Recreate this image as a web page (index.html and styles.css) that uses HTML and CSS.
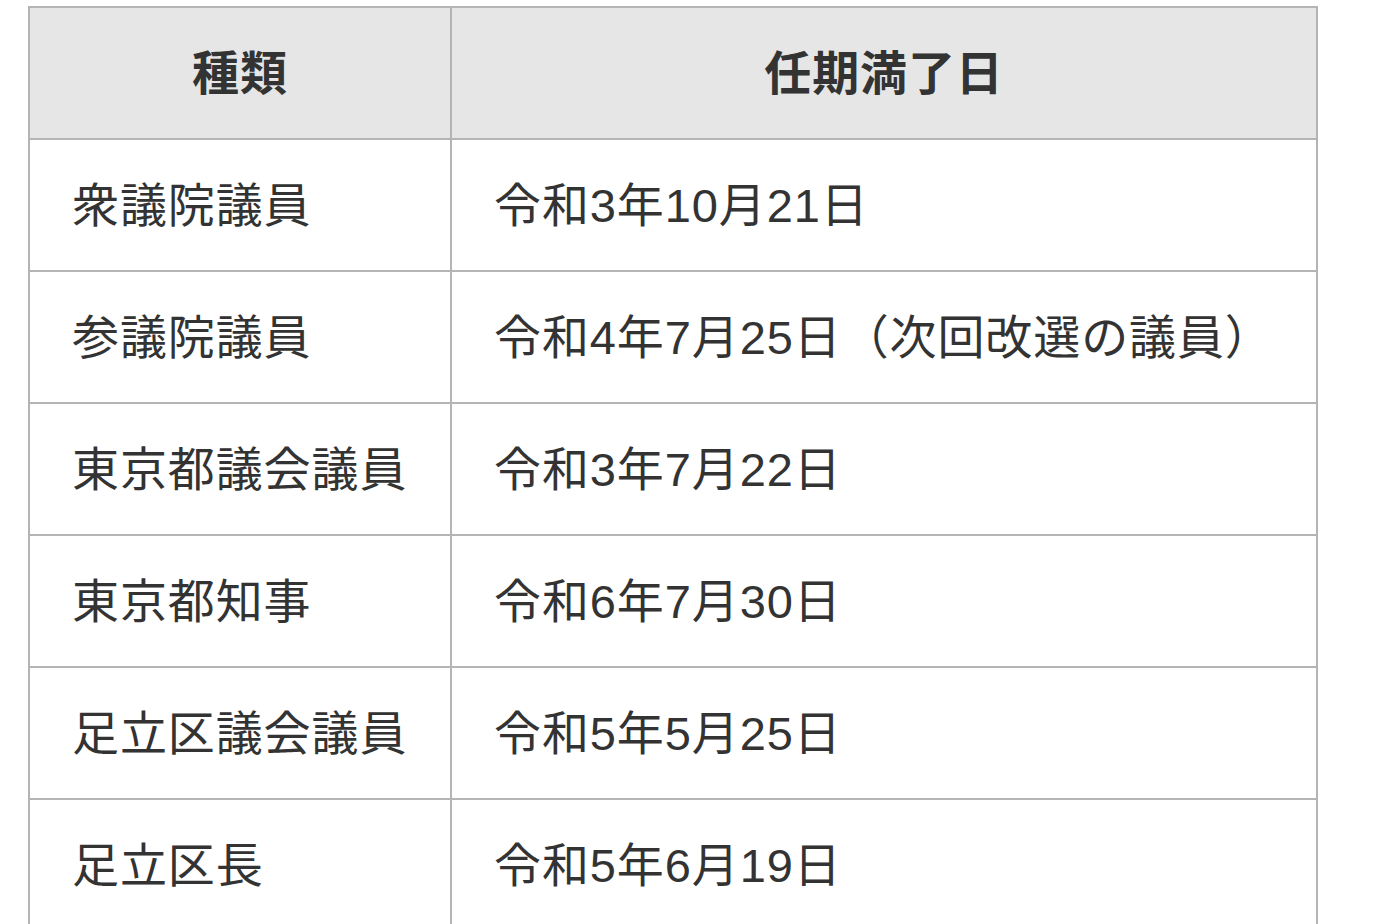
FILE: index.html
```html
<!DOCTYPE html>
<html lang="ja">
<head>
<meta charset="utf-8">
<link rel="stylesheet" href="styles.css">
</head>
<body>
<div class="wrap">
<table class="terms">
<thead>
<tr><th class="c1">種類</th><th class="c2">任期満了日</th></tr>
</thead>
<tbody>
<tr><td>衆議院議員</td><td>令和3年10月21日</td></tr>
<tr><td>参議院議員</td><td>令和4年7月25日（次回改選の議員）</td></tr>
<tr><td>東京都議会議員</td><td>令和3年7月22日</td></tr>
<tr><td>東京都知事</td><td>令和6年7月30日</td></tr>
<tr><td>足立区議会議員</td><td>令和5年5月25日</td></tr>
<tr><td>足立区長</td><td>令和5年6月19日</td></tr>
</tbody>
</table>
</div>
</body>
</html>
```
FILE: styles.css
```css
html, body {
  margin: 0;
  padding: 0;
  background: #fff;
}
.wrap {
  padding: 6px 0 0 28px;
}
.terms {
  width: 1290px;
  border-collapse: separate;
  border-spacing: 0;
  border-top: 2px solid #b4b4b4;
  border-left: 2px solid #b4b4b4;
  table-layout: fixed;
  font-family: "Liberation Sans", "Noto Sans CJK JP", sans-serif;
  color: #333;
  font-size: 47px;
  letter-spacing: 0.9px;
}
.terms th, .terms td {
  box-sizing: border-box;
  height: 132px;
  border-right: 2px solid #b4b4b4;
  border-bottom: 2px solid #b4b4b4;
  padding: 0 0 8px 42px;
  text-align: left;
  vertical-align: middle;
  font-weight: 400;
  white-space: nowrap;
}
.terms th {
  background: #e6e6e6;
  font-weight: 700;
  text-align: center;
  padding: 0 0 8px 0;
}
.terms .c1 {
  width: 422px;
}
.terms td + td {
  padding-left: 42px;
}
```
